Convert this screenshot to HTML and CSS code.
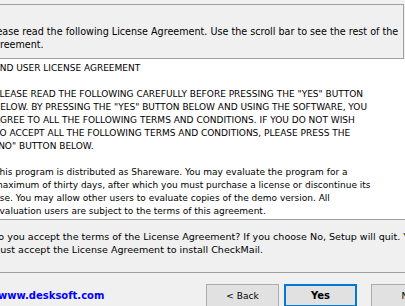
FILE: index.html
```html
<!DOCTYPE html>
<html lang="en">
<head>
<meta charset="utf-8">
<title>License Agreement</title>
<link rel="stylesheet" href="styles.css">
</head>
<body>
<div class="dialog">
  <div class="header">
    <div class="line">Please read the following License Agreement. Use the scroll bar to see the rest of the</div>
    <div class="line">agreement.</div>
  </div>
  <div class="license">
    <div class="line">END USER LICENSE AGREEMENT</div>
    <div class="line">&nbsp;</div>
    <div class="line">PLEASE READ THE FOLLOWING CAREFULLY BEFORE PRESSING THE "YES" BUTTON</div>
    <div class="line">BELOW. BY PRESSING THE "YES" BUTTON BELOW AND USING THE SOFTWARE, YOU</div>
    <div class="line">AGREE TO ALL THE FOLLOWING TERMS AND CONDITIONS. IF YOU DO NOT WISH</div>
    <div class="line">TO ACCEPT ALL THE FOLLOWING TERMS AND CONDITIONS, PLEASE PRESS THE</div>
    <div class="line">"NO" BUTTON BELOW.</div>
    <div class="line">&nbsp;</div>
    <div class="line">This program is distributed as Shareware. You may evaluate the program for a</div>
    <div class="line">maximum of thirty days, after which you must purchase a license or discontinue its</div>
    <div class="line">use. You may allow other users to evaluate copies of the demo version. All</div>
    <div class="line">evaluation users are subject to the terms of this agreement.</div>
  </div>
  <div class="question">
    <div class="line">Do you accept the terms of the License Agreement? If you choose No, Setup will quit. You</div>
    <div class="line">must accept the License Agreement to install CheckMail.</div>
  </div>
  <div class="sep"></div>
  <div class="footer">
    <span class="link">www.desksoft.com</span>
    <button class="btn">&lt; Back</button>
    <button class="btn default">Yes</button>
    <button class="btn">No</button>
  </div>
</div>
</body>
</html>
```

FILE: styles.css
```css
html, body {
  margin: 0;
  padding: 0;
  overflow: hidden;
  background: #f0f0f0;
}
body {
  font-family: "DejaVu Sans", sans-serif;
  font-size: 9px;
  color: #000;
}
.dialog {
  margin-left: -12px;
  width: 417px;
  padding-top: 4px;
}
.line {
  line-height: 13px;
  height: 13px;
  white-space: nowrap;
}
.header {
  border: 1px solid #a0a0a0;
  border-left: none;
  margin-right: 1px;
  padding: 20px 0 7px 0;
  overflow: hidden;
  font-size: 9.6px;
}
.license {
  background: #fff;
  border-bottom: 1px solid #a0a0a0;
  padding: 3px 0 1px 6px;
  overflow: hidden;
}
.question {
  padding: 10px 0 0 3px;
  overflow: hidden;
  font-size: 9.55px;
}
.sep {
  margin-top: 16px;
  border-top: 1px solid #a0a0a0;
}
.footer {
  margin-top: 11px;
  display: flex;
  align-items: center;
  white-space: nowrap;
}
.link {
  flex: 0 0 auto;
  width: 208px;
  margin-left: 10px;
  color: #0000ff;
  font-weight: bold;
  font-size: 10px;
}
.btn {
  flex: 0 0 auto;
  width: 73px;
  height: 23px;
  box-sizing: border-box;
  margin: 0 5px 0 0;
  padding: 0;
  background: #e1e1e1;
  border: 1px solid #adadad;
  font-family: "DejaVu Sans", sans-serif;
  font-size: 9px;
  color: #000;
}
.btn.default {
  border: 2px solid #0078d7;
  font-weight: bold;
  font-size: 10px;
  margin-right: 14px;
}
```
